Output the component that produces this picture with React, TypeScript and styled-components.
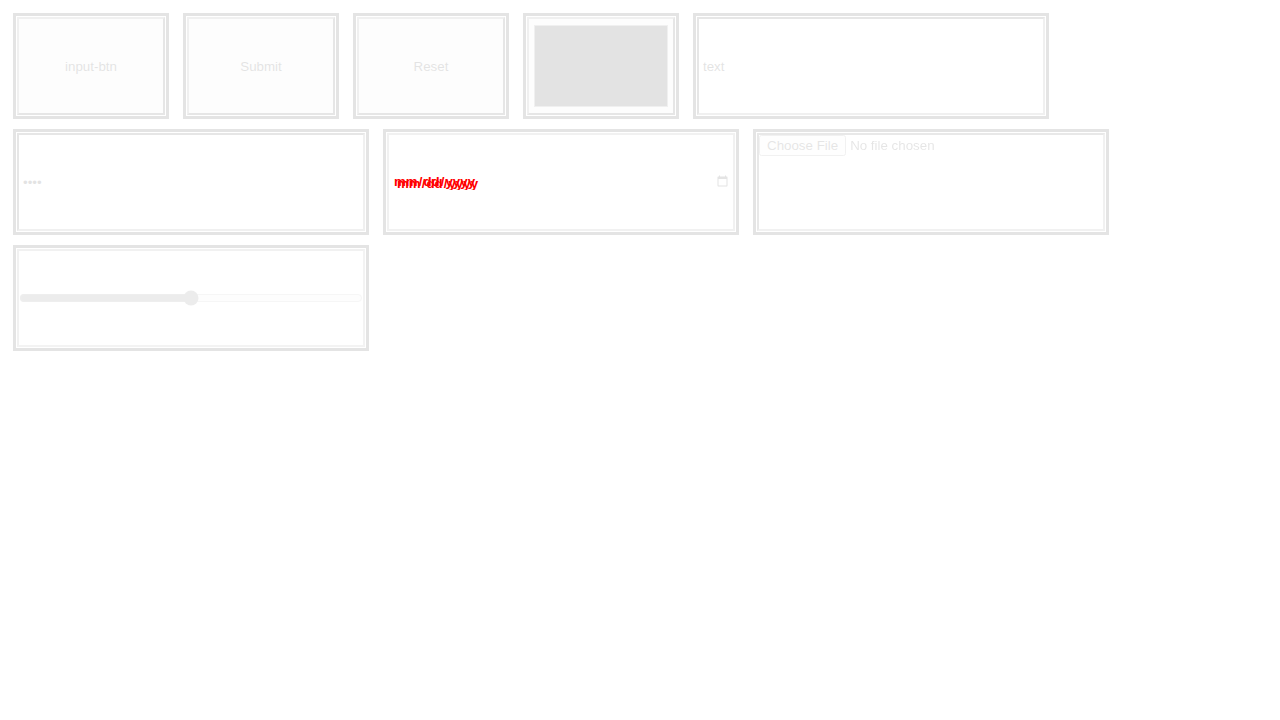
import React from "react";
import styled, { createGlobalStyle, css } from "styled-components";

const GlobalStyle = createGlobalStyle`
  body {
    margin: 8px;
    background: #ffffff;
    font-family: "Liberation Sans", Arial, sans-serif;
  }
`;

const Grid = styled.div`
  display: flex;
  flex-wrap: wrap;
  align-items: flex-start;
  gap: 10px 14px;
  padding: 5px;
`;

const Slot = styled.div<{ $wide?: boolean }>`
  box-sizing: border-box;
  display: flex;
  flex: none;
  width: ${(p) => (p.$wide ? 356 : 156)}px;
  height: 106px;
  padding: 1px;
  border: 3px solid #e4e4e4;
  background: #ffffff;
`;

const faded = css`
  box-sizing: border-box;
  width: 100%;
  height: 100%;
  min-width: 0;
  margin: 0;
  font: 13.333px "Liberation Sans", Arial, sans-serif;
  color: #000000;
  opacity: 0.105;
`;

const ButtonInput = styled.input`
  ${faded}
  appearance: none;
  border: 2px outset #767676;
  background: #efefef;
  padding: 1px 6px;
  text-align: center;
`;

const ColorInput = styled.input`
  ${faded}
  border: 2px outset #767676;
  background: #efefef;
  padding: 2px 3px;
`;

const TextInput = styled.input`
  ${faded}
  appearance: none;
  border: 2px inset #767676;
  background: #ffffff;
  padding: 1px 4px;
`;

const FileInput = styled.input`
  ${faded}
  border: 2px inset #767676;
  padding: 0;
  display: block;

  &::file-selector-button {
    margin: 0 4px 0 0;
  }
`;

const RangeFrame = styled.div`
  box-sizing: border-box;
  display: flex;
  align-items: center;
  width: 100%;
  height: 100%;
  border: 2px solid;
  border-color: #f1f1f1 #f3f3f3 #f3f3f3 #f1f1f1;
`;

const RangeInput = styled.input`
  ${faded}
  padding: 0;
  accent-color: #5a5a5a;
`;

const DateInput = styled.input`
  box-sizing: border-box;
  width: 100%;
  height: 100%;
  min-width: 0;
  margin: 0;
  appearance: none;
  border: 2px solid #f1f1f1;
  background: #ffffff;
  padding: 1px 2px 1px 4px;
  font: bold 13.333px "Liberation Sans", Arial, sans-serif;
  color: #ff0000;

  &::-webkit-datetime-edit {
    text-shadow: 3px 2px 0 #ff0000;
  }

  &::-webkit-calendar-picker-indicator {
    opacity: 0.1;
  }
`;

export default function App() {
  return (
    <>
      <GlobalStyle />
      <Grid>
        <Slot>
          <ButtonInput type="button" value="input-btn" />
        </Slot>
        <Slot>
          <ButtonInput type="submit" value="Submit" />
        </Slot>
        <Slot>
          <ButtonInput type="reset" value="Reset" />
        </Slot>
        <Slot>
          <ColorInput type="color" defaultValue="#000000" />
        </Slot>
        <Slot $wide>
          <TextInput type="text" defaultValue="text" />
        </Slot>
        <Slot $wide>
          <TextInput type="password" defaultValue="1234" />
        </Slot>
        <Slot $wide>
          <DateInput type="date" />
        </Slot>
        <Slot $wide>
          <FileInput type="file" />
        </Slot>
        <Slot $wide>
          <RangeFrame>
            <RangeInput type="range" defaultValue={50} />
          </RangeFrame>
        </Slot>
      </Grid>
    </>
  );
}
